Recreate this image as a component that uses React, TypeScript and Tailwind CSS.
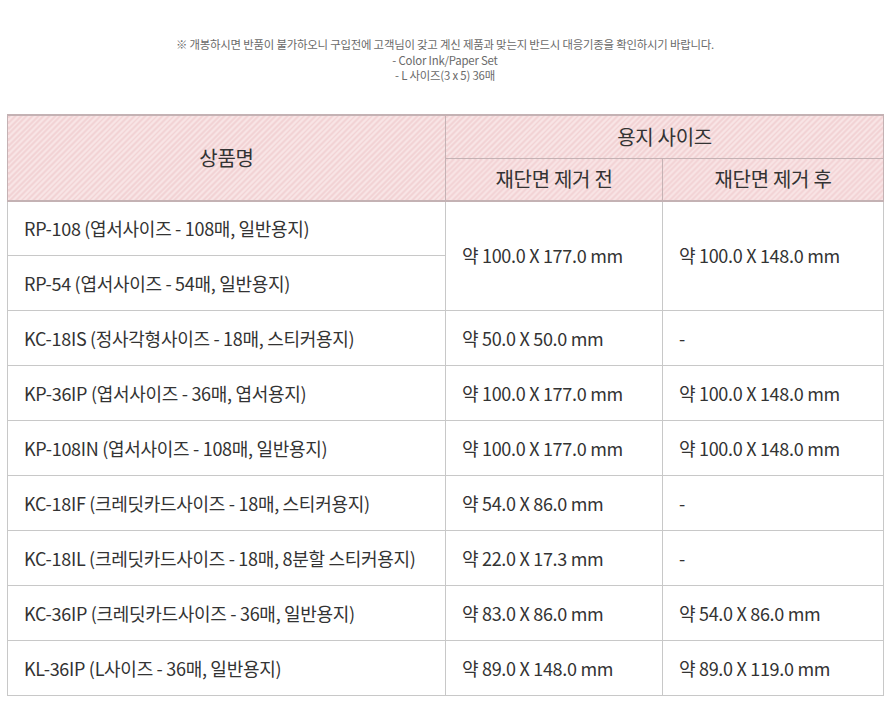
const rows = [
  { name: "RP-108 (엽서사이즈 - 108매, 일반용지)", before: "약 100.0 X 177.0 mm", after: "약 100.0 X 148.0 mm", span: 2 },
  { name: "RP-54 (엽서사이즈 - 54매, 일반용지)", skip: true },
  { name: "KC-18IS (정사각형사이즈 - 18매, 스티커용지)", before: "약 50.0 X 50.0 mm", after: "-" },
  { name: "KP-36IP (엽서사이즈 - 36매, 엽서용지)", before: "약 100.0 X 177.0 mm", after: "약 100.0 X 148.0 mm" },
  { name: "KP-108IN (엽서사이즈 - 108매, 일반용지)", before: "약 100.0 X 177.0 mm", after: "약 100.0 X 148.0 mm" },
  { name: "KC-18IF (크레딧카드사이즈 - 18매, 스티커용지)", before: "약 54.0 X 86.0 mm", after: "-" },
  { name: "KC-18IL (크레딧카드사이즈 - 18매, 8분할 스티커용지)", before: "약 22.0 X 17.3 mm", after: "-" },
  { name: "KC-36IP (크레딧카드사이즈 - 36매, 일반용지)", before: "약 83.0 X 86.0 mm", after: "약 54.0 X 86.0 mm" },
  { name: "KL-36IP (L사이즈 - 36매, 일반용지)", before: "약 89.0 X 148.0 mm", after: "약 89.0 X 119.0 mm" },
];

const stripe =
  "bg-[repeating-linear-gradient(135deg,#f2d3d5_0px,#f2d3d5_2px,#f8e4e5_2px,#f8e4e5_4px)]";

export default function App() {
  return (
    <div className="w-[890px] bg-white pt-[37px] font-['Noto_Sans_CJK_KR','Noto_Sans',sans-serif] text-[#333]">
      {/* notice */}
      <div className="text-center text-[11.4px] leading-[15.5px] tracking-[-0.2px] text-[#6a6a6a]">
        <p>※ 개봉하시면 반품이 불가하오니 구입전에 고객님이 갖고 계신 제품과 맞는지 반드시 대응기종을 확인하시기 바랍니다.</p>
        <p>- Color Ink/Paper Set</p>
        <p>- L 사이즈(3 x 5) 36매</p>
      </div>

      <table className="mt-[30px] ml-[7px] w-[876px] table-fixed border-collapse text-[18px] tracking-[-0.3px]">
        <colgroup>
          <col className="w-[438px]" />
          <col className="w-[217px]" />
          <col className="w-[221px]" />
        </colgroup>
        <thead>
          <tr className="h-[44px]">
            <th rowSpan={2} className={`${stripe} border-t-2 border-b-2 border-x border-[#c4b2b4] text-[20px] font-normal`}>
              상품명
            </th>
            <th colSpan={2} className={`${stripe} border-t-2 border-x border-b border-[#c4b2b4] text-[20px] font-normal`}>
              용지 사이즈
            </th>
          </tr>
          <tr className="h-[42px]">
            <th className={`${stripe} border-b-2 border-x border-[#c4b2b4] text-[20px] font-normal`}>재단면 제거 전</th>
            <th className={`${stripe} border-b-2 border-x border-[#c4b2b4] text-[20px] font-normal`}>재단면 제거 후</th>
          </tr>
        </thead>
        <tbody>
          {rows.map((r) => (
            <tr key={r.name} className="h-[55px]">
              <td className="border border-[#c8c8c8] pl-[16px] text-left">{r.name}</td>
              {!r.skip && (
                <>
                  <td rowSpan={r.span ?? 1} className="border border-[#c8c8c8] pl-[16px] text-left">
                    {r.before}
                  </td>
                  <td rowSpan={r.span ?? 1} className="border border-[#c8c8c8] pl-[16px] text-left">
                    {r.after}
                  </td>
                </>
              )}
            </tr>
          ))}
        </tbody>
      </table>
      <div className="h-[24px]" />
    </div>
  );
}
